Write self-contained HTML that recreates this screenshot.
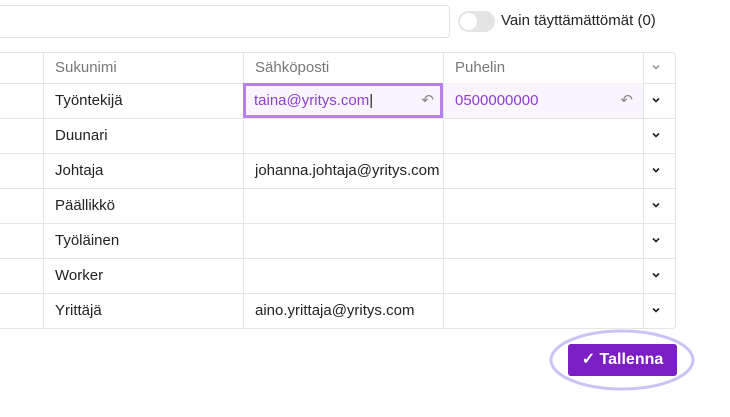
<!DOCTYPE html><html><head><style>
body{margin:0;width:730px;height:417px;background:#fff;font-family:"Liberation Sans",sans-serif;position:relative;overflow:hidden}
.a{position:absolute}
.row{position:absolute;left:-2px;width:678px;height:35px;border-bottom:1px solid #e6e6e6;font-size:15px;color:#222}
.c{position:absolute;top:0;height:100%;border-left:1px solid #e6e6e6;line-height:35px;padding-left:11px;box-sizing:border-box;white-space:nowrap;overflow:hidden}
.chev{position:absolute;left:654px;top:14px;width:8px;height:6px}
</style></head><body>
<div class="a" style="left:-5px;top:5px;width:455px;height:33px;border:1px solid #e2e2e2;border-radius:4px;box-sizing:border-box"></div>
<div class="a" style="left:458px;top:11px;width:37px;height:21px;border-radius:11px;background:#e4e4e4"></div>
<div class="a" style="left:460px;top:13px;width:17px;height:17px;border-radius:50%;background:#fff"></div>
<div class="a" style="left:501px;top:11px;font-size:15px;color:#222;line-height:20px">Vain täyttämättömät (0)</div>
<div class="a" style="left:-2px;top:52px;width:678px;height:277px;border:1px solid #e6e6e6;border-left:none;border-radius:0 4px 4px 0;box-sizing:border-box"></div>
<div class="row" style="top:52px;height:31px;color:#777">
<div class="c" style="left:45px;width:200px;line-height:31px">Sukunimi</div>
<div class="c" style="left:245px;width:200px;line-height:31px">Sähköposti</div>
<div class="c" style="left:445px;width:200px;line-height:31px">Puhelin</div>
<div class="c" style="left:645px;width:33px"></div><svg class="chev" style="top:12px" viewBox="0 0 8 6"><path d="M1 1.5L4 4.5L7 1.5" fill="none" stroke="#888" stroke-width="1.3"/></svg></div>
<div class="row" style="top:83px">
<div class="c" style="left:245px;width:200px;background:#faf5fd;border:3px solid #b77ff0;line-height:29px;padding-left:8px;color:#8e3fd0">taina@yritys.com<span style="color:#222">|</span><span style="position:absolute;right:6px;color:#888">↶</span></div>
<div class="c" style="left:45px;width:200px">Työntekijä</div>
<div class="c" style="left:445px;width:200px;background:#faf5fd;color:#8e3fd0">0500000000<span style="position:absolute;right:10px;color:#888">↶</span></div>
<div class="c" style="left:645px;width:33px"></div><svg class="chev" viewBox="0 0 8 6"><path d="M1 1.5L4 4.5L7 1.5" fill="none" stroke="#222" stroke-width="1.6"/></svg></div>
<div class="row" style="top:118px"><div class="c" style="left:45px;width:200px">Duunari</div><div class="c" style="left:245px;width:200px"></div><div class="c" style="left:445px;width:200px"></div><div class="c" style="left:645px;width:33px"></div><svg class="chev" viewBox="0 0 8 6"><path d="M1 1.5L4 4.5L7 1.5" fill="none" stroke="#222" stroke-width="1.6"/></svg></div>
<div class="row" style="top:153px"><div class="c" style="left:45px;width:200px">Johtaja</div><div class="c" style="left:245px;width:200px">johanna.johtaja@yritys.com</div><div class="c" style="left:445px;width:200px"></div><div class="c" style="left:645px;width:33px"></div><svg class="chev" viewBox="0 0 8 6"><path d="M1 1.5L4 4.5L7 1.5" fill="none" stroke="#222" stroke-width="1.6"/></svg></div>
<div class="row" style="top:188px"><div class="c" style="left:45px;width:200px">Päällikkö</div><div class="c" style="left:245px;width:200px"></div><div class="c" style="left:445px;width:200px"></div><div class="c" style="left:645px;width:33px"></div><svg class="chev" viewBox="0 0 8 6"><path d="M1 1.5L4 4.5L7 1.5" fill="none" stroke="#222" stroke-width="1.6"/></svg></div>
<div class="row" style="top:223px"><div class="c" style="left:45px;width:200px">Työläinen</div><div class="c" style="left:245px;width:200px"></div><div class="c" style="left:445px;width:200px"></div><div class="c" style="left:645px;width:33px"></div><svg class="chev" viewBox="0 0 8 6"><path d="M1 1.5L4 4.5L7 1.5" fill="none" stroke="#222" stroke-width="1.6"/></svg></div>
<div class="row" style="top:258px"><div class="c" style="left:45px;width:200px">Worker</div><div class="c" style="left:245px;width:200px"></div><div class="c" style="left:445px;width:200px"></div><div class="c" style="left:645px;width:33px"></div><svg class="chev" viewBox="0 0 8 6"><path d="M1 1.5L4 4.5L7 1.5" fill="none" stroke="#222" stroke-width="1.6"/></svg></div>
<div class="row" style="top:293px;border-bottom:none"><div class="c" style="left:45px;width:200px">Yrittäjä</div><div class="c" style="left:245px;width:200px">aino.yrittaja@yritys.com</div><div class="c" style="left:445px;width:200px"></div><div class="c" style="left:645px;width:33px"></div><svg class="chev" viewBox="0 0 8 6"><path d="M1 1.5L4 4.5L7 1.5" fill="none" stroke="#222" stroke-width="1.6"/></svg></div>
<svg class="a" style="left:548px;top:328px" width="150" height="64"><ellipse cx="74" cy="32" rx="71" ry="29" fill="none" stroke="#c8c4f8" stroke-width="3"/></svg>
<div class="a" style="left:568px;top:344px;width:109px;height:32px;background:#7b1fc4;border-radius:3px;color:#fff;font-weight:bold;font-size:16px;line-height:32px;text-align:center">✓ Tallenna</div>
</body></html>
